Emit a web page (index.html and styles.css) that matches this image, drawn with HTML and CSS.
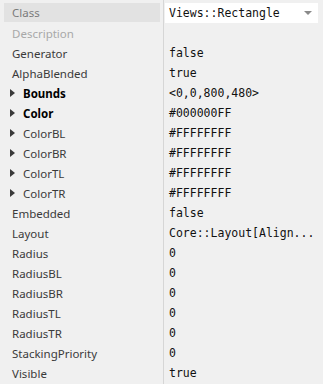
FILE: index.html
```html
<!DOCTYPE html>
<html lang="en">
<head>
  <meta charset="UTF-8">
  <title>Properties</title>
  <link rel="stylesheet" href="styles.css">
</head>
<body>
  <div class="props">
    <!-- property names -->
    <div class="names">
      <div class="row name selected muted">Class</div>
      <div class="row name faint">Description</div>
      <div class="row name">Generator</div>
      <div class="row name">AlphaBlended</div>
      <div class="row name group bold"><span class="arrow"></span>Bounds</div>
      <div class="row name group bold"><span class="arrow"></span>Color</div>
      <div class="row name group"><span class="arrow"></span>ColorBL</div>
      <div class="row name group"><span class="arrow"></span>ColorBR</div>
      <div class="row name group"><span class="arrow"></span>ColorTL</div>
      <div class="row name group"><span class="arrow"></span>ColorTR</div>
      <div class="row name">Embedded</div>
      <div class="row name">Layout</div>
      <div class="row name">Radius</div>
      <div class="row name">RadiusBL</div>
      <div class="row name">RadiusBR</div>
      <div class="row name">RadiusTL</div>
      <div class="row name">RadiusTR</div>
      <div class="row name">StackingPriority</div>
      <div class="row name">Visible</div>
    </div>

    <!-- values -->
    <div class="values">
      <div class="row">
        <div class="combo">
          <span>Views::Rectangle</span>
          <span class="caret"></span>
        </div>
      </div>
      <div class="row value"></div>
      <div class="row value">false</div>
      <div class="row value">true</div>
      <div class="row value">&lt;0,0,800,480&gt;</div>
      <div class="row value">#000000FF</div>
      <div class="row value">#FFFFFFFF</div>
      <div class="row value">#FFFFFFFF</div>
      <div class="row value">#FFFFFFFF</div>
      <div class="row value">#FFFFFFFF</div>
      <div class="row value">false</div>
      <div class="row value">Core::Layout[Align...</div>
      <div class="row value">0</div>
      <div class="row value">0</div>
      <div class="row value">0</div>
      <div class="row value">0</div>
      <div class="row value">0</div>
      <div class="row value">0</div>
      <div class="row value">true</div>
    </div>
  </div>
</body>
</html>
```

FILE: styles.css
```css
html, body {
  margin: 0;
  height: 100%;
}
body {
  background: #f0f0f0;
  font-family: 'Noto Sans', 'Open Sans', sans-serif;
  font-size: 11.5px;
  color: #3a3a3a;
  overflow: hidden;
}
.props {
  display: flex;
  height: 100%;
}
.names {
  width: 156px;
  margin-left: 4px;
  margin-right: 3px;
  padding-top: 3px;
}
.values {
  flex: 1;
  border-left: 1px solid #d6d6d6;
  padding-top: 3px;
}
.row {
  height: 20px;
  display: flex;
  align-items: center;
  white-space: nowrap;
}
.name {
  padding-left: 8px;
}
.name.group {
  padding-left: 6px;
}
.selected {
  background: #e2e2e2;
  height: 19px;
  margin-bottom: 1px;
}
.muted {
  color: #7a7a7a;
}
.faint {
  color: #a8a8a8;
}
.bold {
  font-weight: bold;
  color: #000;
}
.arrow {
  width: 0;
  height: 0;
  border-top: 4.5px solid transparent;
  border-bottom: 4.5px solid transparent;
  border-left: 5px solid #3a3a3a;
  margin-right: 8px;
}
.value {
  padding-left: 5px;
  font-family: 'DejaVu Sans Mono', 'Liberation Mono', monospace;
  font-size: 11.5px;
  color: #111;
}
.combo {
  margin-left: 1px;
  width: 153px;
  height: 20px;
  background: #fff;
  display: flex;
  align-items: center;
  justify-content: space-between;
  padding-left: 4px;
  padding-right: 6px;
  box-sizing: border-box;
  font-family: 'DejaVu Sans Mono', 'Liberation Mono', monospace;
  font-size: 11.5px;
  color: #111;
}
.caret {
  width: 0;
  height: 0;
  border-left: 4px solid transparent;
  border-right: 4px solid transparent;
  border-top: 4px solid #8a8a8a;
}
```
